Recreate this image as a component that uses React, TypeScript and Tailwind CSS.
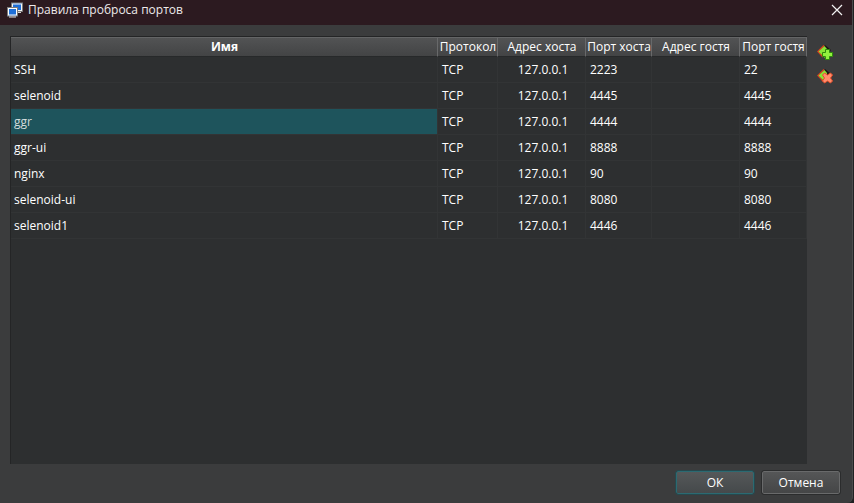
import React from "react";

type Rule = {
  name: string;
  protocol: string;
  hostAddress: string;
  hostPort: string;
  guestAddress: string;
  guestPort: string;
};

const rules: Rule[] = [
  { name: "SSH", protocol: "TCP", hostAddress: "127.0.0.1", hostPort: "2223", guestAddress: "", guestPort: "22" },
  { name: "selenoid", protocol: "TCP", hostAddress: "127.0.0.1", hostPort: "4445", guestAddress: "", guestPort: "4445" },
  { name: "ggr", protocol: "TCP", hostAddress: "127.0.0.1", hostPort: "4444", guestAddress: "", guestPort: "4444" },
  { name: "ggr-ui", protocol: "TCP", hostAddress: "127.0.0.1", hostPort: "8888", guestAddress: "", guestPort: "8888" },
  { name: "nginx", protocol: "TCP", hostAddress: "127.0.0.1", hostPort: "90", guestAddress: "", guestPort: "90" },
  { name: "selenoid-ui", protocol: "TCP", hostAddress: "127.0.0.1", hostPort: "8080", guestAddress: "", guestPort: "8080" },
  { name: "selenoid1", protocol: "TCP", hostAddress: "127.0.0.1", hostPort: "4446", guestAddress: "", guestPort: "4446" },
];

const columns = ["Имя", "Протокол", "Адрес хоста", "Порт хоста", "Адрес гостя", "Порт гостя"];

function AppIcon() {
  return (
    <svg width="16" height="16" viewBox="0 0 16 16" aria-hidden="true">
      <rect x="4.5" y="1" width="11" height="8.500" fill="#1f6fd8" stroke="#7c7c7c" />
      <rect x="5.500" y="2" width="9" height="6.500" fill="#1f6fd8" stroke="#f6f6f6" />
      <path d="M11 10.500h3" stroke="#d8d8d8" />
      <rect x="0.5" y="5.500" width="10" height="8.500" fill="#1f6fd8" stroke="#7c7c7c" />
      <rect x="1.500" y="6.500" width="8" height="6.500" fill="#1f6fd8" stroke="#ffffff" />
      <path d="M2 15h7" stroke="#e2e2e2" />
    </svg>
  );
}

function RuleShape() {
  return (
    <>
      <path d="M8 1 14 6 9 13 4 8Z" fill="#1b1714" />
      <path d="M7 1.500 1 7.500 6 13" fill="none" stroke="#d8401c" strokeWidth="1.500" />
      <path d="M7.500 2 1.500 7.500 8 14 10 13 10 5Z" fill="#8ae436" />
    </>
  );
}

function AddIcon() {
  return (
    <svg width="16" height="16" viewBox="0 0 16 16" aria-hidden="true">
      <RuleShape />
      <path d="M8.500 5.500h4v3h3v4h-3v3h-4v-3h-3v-4h3Z" fill="#92f03e" stroke="#2f8a0c" />
    </svg>
  );
}

function RemoveIcon() {
  return (
    <svg width="16" height="16" viewBox="0 0 16 16" aria-hidden="true">
      <RuleShape />
      <path
        d="M7.500 5 10.500 7 13.500 5 15.500 7 13.500 10 15.500 13 13.500 15 10.500 13 7.500 15 5.500 13 7.500 10 5.500 7Z"
        fill="#ff8c6c"
        stroke="#e84e2a"
      />
    </svg>
  );
}

function RuleTable() {
  return (
    <div className="min-w-0 flex-1 border-t border-l border-[#242526] bg-[#2d2f30]">
      <table className="w-full table-fixed border-separate border-spacing-0">
        <colgroup>
          <col />
          <col className="w-[60px]" />
          <col className="w-[88px]" />
          <col className="w-[66px]" />
          <col className="w-[88px]" />
          <col className="w-[67px]" />
        </colgroup>
        <thead>
          <tr className="h-5">
            {columns.map((title, i) => (
              <th
                key={title}
                scope="col"
                className={
                  "overflow-hidden border-t border-r border-t-[#646566] border-r-[#68696a] border-b border-b-[#27292a] bg-linear-to-b from-[#525354] to-[#434445] py-0 pr-0 pl-px text-center leading-[18px] whitespace-nowrap " +
                  (i === 0 ? "font-bold" : "font-normal")
                }
              >
                {title}
              </th>
            ))}
          </tr>
        </thead>
        <tbody>
          {rules.map((rule, i) => (
            <tr key={rule.name} className="h-[26px]">
              <td
                className={
                  "border-r border-b border-[#323435] px-[3px] py-0 " +
                  (i === 2 ? "bg-[#1e545c] text-[#d3dcdd]" : "")
                }
              >
                {rule.name}
              </td>
              <td className="border-r border-b border-[#323435] px-1 py-0">{rule.protocol}</td>
              <td className="border-r border-b border-[#323435] py-0 pr-0 pl-[3px] text-center">{rule.hostAddress}</td>
              <td className="border-r border-b border-[#323435] px-1 py-0">{rule.hostPort}</td>
              <td className="border-r border-b border-[#323435] py-0 pr-0 pl-[3px] text-center">{rule.guestAddress}</td>
              <td className="border-r border-b border-[#323435] px-1 py-0">{rule.guestPort}</td>
            </tr>
          ))}
        </tbody>
      </table>
    </div>
  );
}

export default function App() {
  return (
    <div className="h-screen bg-[#202122] pr-px font-['Open_Sans','Noto_Sans',sans-serif] text-[12px] leading-4 text-white">
      <div className="flex h-full flex-col overflow-hidden rounded-br-md border-r border-[#4a4b4c] bg-[#3b3c3d]">
        <header className="flex h-[25px] shrink-0 items-center bg-[#2c1a20] pr-[9px] pb-[6px] pl-[7px]">
          <AppIcon />
          <h1 className="ml-[5px] flex-1 text-[#eeeaeb]">Правила проброса портов</h1>
          <button type="button" aria-label="Закрыть" className="p-0">
            <svg width="12" height="12" viewBox="0 0 12 12" aria-hidden="true">
              <path d="M1 1 11 11M11 1 1 11" stroke="#f2f2f2" strokeWidth="1.200" />
            </svg>
          </button>
        </header>
        <main className="flex min-h-0 flex-1 pt-[11px] pl-[10px]">
          <RuleTable />
          <div className="flex w-[45px] shrink-0 flex-col gap-2 pt-2 pl-[10px]">
            <button type="button" aria-label="Добавить правило" className="h-4 w-4 p-0">
              <AddIcon />
            </button>
            <button type="button" aria-label="Удалить правило" className="h-4 w-4 p-0">
              <RemoveIcon />
            </button>
          </div>
        </main>
        <footer className="flex shrink-0 justify-end gap-2 pt-[7px] pr-3 pb-[9px]">
          <button
            type="button"
            className="h-[23px] w-[78px] rounded-xs border border-[#2b6a72] bg-linear-to-b from-[#555859] to-[#45494b] leading-5 outline outline-[#27484d]"
          >
            ОК
          </button>
          <button
            type="button"
            className="h-[23px] w-[78px] rounded-xs border border-[#696a6b] bg-linear-to-b from-[#555657] to-[#454647] leading-5 outline outline-[#2b2c2d]"
          >
            Отмена
          </button>
        </footer>
      </div>
    </div>
  );
}
